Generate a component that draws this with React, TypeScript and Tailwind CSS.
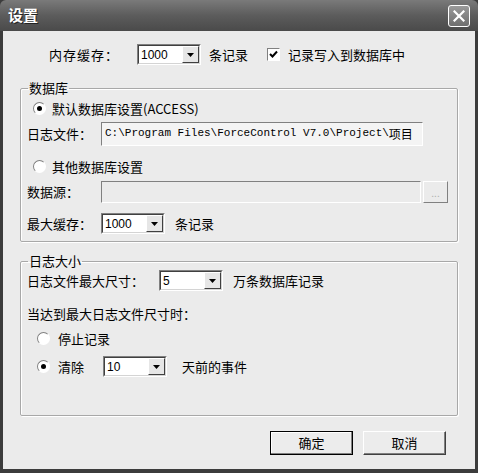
const cjk = "font-['SimSun','Noto_Sans_CJK_SC',sans-serif]";

function Combo({ value, width }: { value: string; width: string }) {
  return (
    <div className={`flex h-[21px] ${width} items-stretch border border-t-[#808080] border-l-[#808080] border-r-white border-b-white bg-white`}>
      <div className="flex flex-1 items-center border border-t-[#404040] border-l-[#404040] border-r-[#d4d4d4] border-b-[#d4d4d4] pl-[2px] font-['Liberation_Sans',sans-serif] text-[12px] text-black">
        {value}
        <div className="ml-auto flex h-full w-[17px] items-center justify-center border border-t-white border-l-white border-r-[#404040] border-b-[#404040] bg-[#e6e6e6]">
          <svg width="7" height="4" viewBox="0 0 7 4">
            <path d="M0 0h7L3.5 4z" fill="#000" />
          </svg>
        </div>
      </div>
    </div>
  );
}

function Radio({ checked }: { checked?: boolean }) {
  return (
    <span className="flex h-[13px] w-[13px] items-center justify-center rounded-full border border-t-[#808080] border-l-[#808080] border-r-white border-b-white bg-white">
      {checked && <span className="h-[5px] w-[5px] rounded-full bg-black" />}
    </span>
  );
}

function Group({ title, className, children }: { title: string; className: string; children: React.ReactNode }) {
  return (
    <fieldset className={`mx-[17px] rounded-[2px] border border-[#a8a8a8] px-[6px] shadow-[inset_1px_1px_0_#fff,1px_1px_0_#fff] ${className}`}>
      <legend className="ml-[1px] px-[1px] text-[13px] leading-[14px] text-black">{title}</legend>
      {children}
    </fieldset>
  );
}

export default function App() {
  return (
    <div className={`flex h-[473px] w-[478px] flex-col bg-[#3c3c3c] ${cjk} text-[13px] text-black`}>
      <div className="flex h-[31px] items-center rounded-t-[6px] bg-gradient-to-b from-[#7a7a7a] via-[#5c5c5c] to-[#4a4a4a] px-[8px]">
        <span className="text-[15px] font-bold text-white [text-shadow:1px_1px_0_#222]">设置</span>
        <div className="ml-auto flex h-[22px] w-[22px] items-center justify-center rounded-[3px] border border-white bg-gradient-to-b from-[#9a9a9a] to-[#6e6e6e]">
          <svg width="12" height="12" viewBox="0 0 12 12">
            <path d="M1.5 1.5l9 9M10.5 1.5l-9 9" stroke="#fff" strokeWidth="2.2" strokeLinecap="square" />
          </svg>
        </div>
      </div>
      <div className="mx-[3px] mb-[4px] flex flex-1 flex-col bg-[#ebebeb]">
        <div className="mt-[13px] flex h-[21px] items-center">
          <span className="ml-[46px] w-[88px] tracking-[1px]">内存缓存：</span>
          <Combo value="1000" width="w-[64px]" />
          <span className="ml-[8px]">条记录</span>
          <span className="ml-[19px] flex h-[13px] w-[13px] items-center justify-center border border-t-[#808080] border-l-[#808080] border-r-white border-b-white bg-white">
            <svg width="9" height="9" viewBox="0 0 9 9">
              <path d="M1 4l2.5 2.5L8 1.5" stroke="#000" strokeWidth="2" fill="none" />
            </svg>
          </span>
          <span className="ml-[8px]">记录写入到数据库中</span>
        </div>

        <Group title="数据库" className="mt-[16px] h-[161px]">
          <div className="mt-[4px] flex items-center gap-[6px] pl-[6px]">
            <Radio checked />
            <span>默认数据库设置(ACCESS)</span>
          </div>
          <div className="mt-[3px] flex h-[24px] items-center">
            <span className="w-[74px]">日志文件：</span>
            <div className="flex h-[24px] w-[322px] items-center overflow-hidden whitespace-nowrap border border-t-[#808080] border-l-[#808080] border-r-white border-b-white bg-[#f4f4f4] pl-[3px] font-['Liberation_Mono',monospace] text-[11px]">
              C:\Program Files\ForceControl V7.0\Project\<span className={cjk + " text-[12px]"}>项目</span>
            </div>
          </div>
          <div className="mt-[11px] flex items-center gap-[6px] pl-[6px]">
            <Radio />
            <span>其他数据库设置</span>
          </div>
          <div className="mt-[4px] flex h-[24px] items-center">
            <span className="w-[74px]">数据源：</span>
            <div className="h-[22px] w-[320px] border border-t-[#808080] border-l-[#808080] border-r-white border-b-white bg-[#ebebeb]" />
            <div className="ml-[2px] flex h-[22px] w-[25px] items-center justify-center border border-t-white border-l-white border-r-[#808080] border-b-[#808080] text-[10px] text-[#b0b0b0]">
              ...
            </div>
          </div>
          <div className="mt-[9px] flex h-[21px] items-center">
            <span className="w-[74px]">最大缓存：</span>
            <Combo value="1000" width="w-[64px]" />
            <span className="ml-[10px]">条记录</span>
          </div>
        </Group>

        <Group title="日志大小" className="mt-[12px] h-[162px]">
          <div className="mt-[2px] flex h-[21px] items-center">
            <span className="w-[132px]">日志文件最大尺寸：</span>
            <Combo value="5" width="w-[64px]" />
            <span className="ml-[10px]">万条数据库记录</span>
          </div>
          <div className="mt-[13px]">当达到最大日志文件尺寸时：</div>
          <div className="mt-[5px] flex items-center gap-[8px] pl-[10px]">
            <Radio />
            <span>停止记录</span>
          </div>
          <div className="mt-[8px] flex h-[21px] items-center pl-[10px]">
            <Radio checked />
            <span className="ml-[8px] w-[45px]">清除</span>
            <Combo value="10" width="w-[64px]" />
            <span className="ml-[15px]">天前的事件</span>
          </div>
        </Group>

        <div className="mt-[15px] flex gap-[10px] pl-[267px]">
          <button className="h-[24px] w-[83px] border border-black bg-[#ececec] shadow-[inset_-1px_-1px_0_#808080,inset_1px_1px_0_#fff] text-[13px]">确定</button>
          <button className="h-[24px] w-[83px] border border-t-white border-l-white border-r-[#404040] border-b-[#404040] bg-[#ececec] shadow-[inset_-1px_-1px_0_#808080] text-[13px]">取消</button>
        </div>
      </div>
    </div>
  );
}
